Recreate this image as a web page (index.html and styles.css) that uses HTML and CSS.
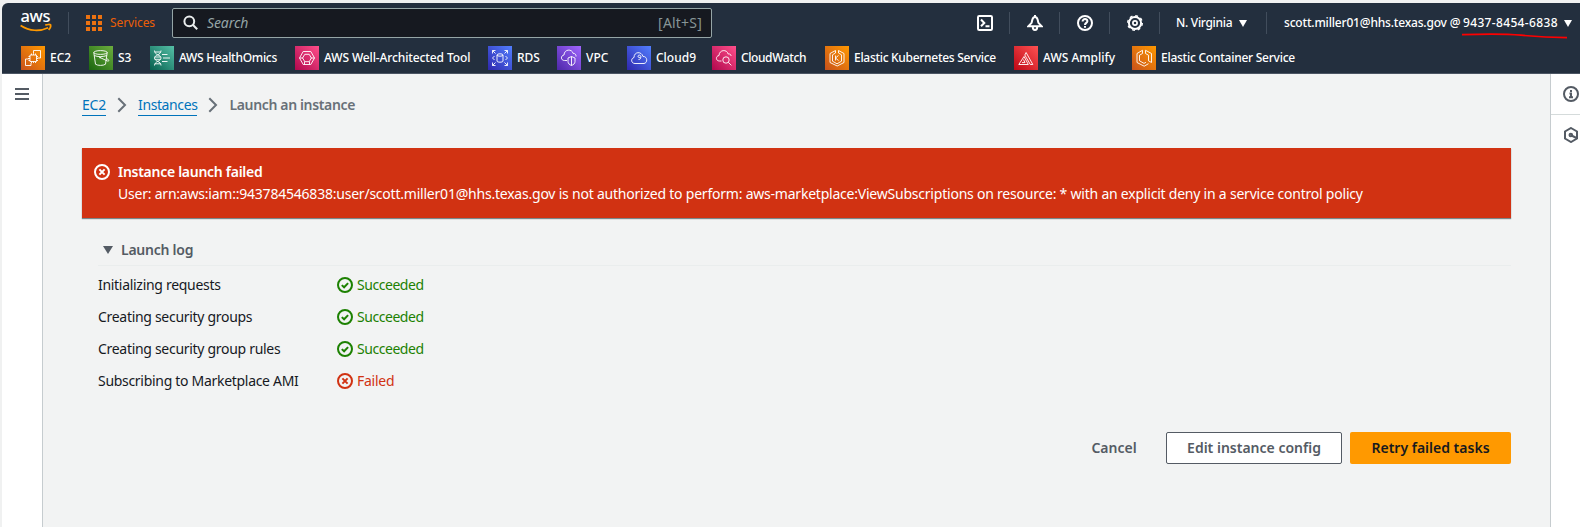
FILE: index.html
```
<!DOCTYPE html>
<html lang="en">
<head>
<meta charset="utf-8">
<title>Launch an instance | EC2</title>
<link rel="stylesheet" href="styles.css">
</head>
<body>
<svg class="defs" aria-hidden="true">
  <symbol id="ok" viewBox="0 0 16 16"><circle cx="8" cy="8" r="7"/><path d="M4.8 8.1l2.3 2.2 4-4.2"/></symbol>
  <symbol id="bad" viewBox="0 0 16 16"><circle cx="8" cy="8" r="7"/><path d="M5.4 5.4l5.2 5.2M10.6 5.4l-5.2 5.2"/></symbol>
  <symbol id="chevron" viewBox="0 0 10 16"><path d="M1.3 1.3L8 8l-6.7 6.7"/></symbol>
</svg>
<div class="window">
  <header class="header">
    <div class="topbar">
      <svg class="aws" viewBox="0 0 32 22">
        <text x="0.5" y="10.2" textLength="30">aws</text>
        <path d="M.6 13.5c9 6 19.500 6 27.500 2.200"/>
        <path d="M25.300 13.100c2-.8 4.800-.8 5.300-.2.300 1-.6 3.500-2 4.900"/>
      </svg>
      <i class="rule"></i>
      <svg class="grid-icon" viewBox="0 0 16 16"><path d="M0 0h4v4H0zM6 0h4v4H6zM12 0h4v4h-4zM0 6h4v4H0zM6 6h4v4H6zM12 6h4v4h-4zM0 12h4v4H0zM6 12h4v4H6zM12 12h4v4h-4z"/></svg>
      <span class="services">Services</span>
      <div class="search">
        <svg class="icon" viewBox="0 0 16 16"><circle cx="6.300" cy="6.300" r="4.900"/><path d="M9.800 9.800l4.400 4.400"/></svg>
        <span class="placeholder">Search</span>
        <span class="shortcut">[Alt+S]</span>
      </div>
      <div class="tools">
        <span class="tool"><svg class="icon" viewBox="0 0 16 16"><rect x="1" y="1" width="14" height="14" rx="1.200"/><path d="M4 4.500L7.300 8 4 11.300M8.500 11.300h4"/></svg></span>
        <span class="tool"><svg class="icon" viewBox="0 0 16 16"><path d="M1.500 11.200h13L11.400 7.800 10.600 4.500C10 2.600 9 2 8 2S6 2.600 5.400 4.500L4.600 7.800zM5.800 12c0 4 4.400 4 4.400 0M8 0v2"/></svg></span>
        <span class="tool"><svg class="icon" viewBox="0 0 16 16"><circle cx="8" cy="8" r="7"/><path d="M5.600 6.500C5.500 3.300 10.500 3.300 10.400 6.300 10.300 7.900 8 7.900 8 9.900M8 11v1.800"/></svg></span>
        <span class="tool"><svg class="icon" viewBox="0 0 16 16"><circle cx="8" cy="8" r="6.100"/><circle class="teeth" cx="8" cy="8" r="7.300"/><circle class="hub" cx="8" cy="8" r="2.100"/></svg></span>
      </div>
      <div class="region">N. Virginia <svg class="caret" viewBox="0 0 8 7"><path d="M0 0h8L4 7z"/></svg></div>
      <div class="account"><span class="user">scott.miller01@hhs.texas.gov @ </span><span class="account-id">9437-8454-6838<svg class="mark" viewBox="0 0 108 7"><path d="M1 2.600C20 2 48 2 60 3.200S85 5.500 106 5.600"/></svg></span><svg class="caret" viewBox="0 0 8 7"><path d="M0 0h8L4 7z"/></svg></div>
    </div>
    <nav class="favorites">
      <a class="fav ec2"><svg class="tile orange" viewBox="0 0 24 24"><path d="M12.500 7.500V4.500h7V12h-3M10 19.500H4.500V13h3v-1M9 9h6.500v6.500H9zM10.500 7.500V9M12.500 7.500V9M14.500 7.500V9M10.500 15.500V17M12.500 15.500V17M14.500 15.500V17M7.500 10.500H9M7.500 12.500H9M7.500 14.500H9M15.500 10.500H17M15.500 12.500H17M15.500 14.500H17M10 17v2.500"/></svg><span>EC2</span></a>
      <a class="fav s3"><svg class="tile green" viewBox="0 0 24 24"><ellipse cx="11.500" cy="6.500" rx="6.700" ry="1.900"/><path d="M4.800 6.500l1.700 11.700c2 1.600 8 1.600 10 0l1.700-11.700M5.300 9.500c3 1.500 9 1.500 12.400 0M11 11.500l7.500 3.500c2.500.5 1-1.700-.9-2.600"/><circle cx="11" cy="11.500" r=".5"/></svg><span>S3</span></a>
      <a class="fav omics"><svg class="tile teal" viewBox="0 0 24 24"><path d="M4.500 4.500c0 5 6.500 4 6.500 7.500s-6.500 3-6.500 7.500M11 4.500c0 5-6.500 4-6.500 7.500s6.500 3 6.500 7.500M5 6h5.500M5 17.800h5.500M5 11h5.500M5 13.300h5.500M12 8.500h5.500M13 12h7M12 15.500h5.500"/></svg><span>AWS HealthOmics</span></a>
      <a class="fav wat"><svg class="tile pink" viewBox="0 0 24 24"><path d="M8.200 5.500h7.600L19.500 12l-3.700 6.500H8.200L4.500 12zM9.500 15.500v3M14.500 15.500v3M4.500 12H8M16 12h3.500"/><path d="M9.800 8.300h4.400l2.200 3.700-2.200 3.700H9.800L7.600 12z"/></svg><span>AWS Well-Architected Tool</span></a>
      <a class="fav rds"><svg class="tile blue" viewBox="0 0 24 24"><ellipse cx="12" cy="9" rx="3" ry="1.200"/><path d="M9 9v6c0 1.600 6 1.600 6 0V9M4.500 7.500v-3h3M4.500 4.500l3 3M16.500 4.500h3v3M19.500 4.500l-3 3M4.500 16.500v3h3M4.500 19.500l3-3M19.500 16.500v3h-3M19.500 19.500l-3-3M6.500 10l-2 2 2 2M17.500 10l2 2-2 2"/></svg><span>RDS</span></a>
      <a class="fav vpc"><svg class="tile violet" viewBox="0 0 24 24"><path d="M10 14.500H7.500C3.500 14.500 3.500 9.500 7 9c.2-6 8-6.500 9.200-1.500 2-.3 3 1.300 2.800 3"/><path d="M11 12l3.500-1.500L18 12v3.500c0 2-1.500 3.300-3.500 4-2-.7-3.500-2-3.500-4zM14.500 10.500v9"/></svg><span>VPC</span></a>
      <a class="fav cloud9"><svg class="tile blue" viewBox="0 0 24 24"><path d="M8 17.500C4 17.500 3.500 12.500 7 11.500 7 5.500 14.500 5 16 10.500c4.500-.5 5 6.500 1 7z"/><path d="M13.800 10.800c-.5 1.300-2.800 1-2.800-.5s2.800-1.700 2.800.2c0 2-.3 3-2.300 3"/></svg><span>Cloud9</span></a>
      <a class="fav watch"><svg class="tile rose" viewBox="0 0 24 24"><path d="M9.500 15H7.500c-4 0-4-5-.5-5.500.2-6 8-6.500 9.200-1.500 2-.3 3 .8 2.800 2"/><circle cx="14" cy="14" r="3.200"/><path d="M16.400 16.400l3 3"/></svg><span>CloudWatch</span></a>
      <a class="fav eks"><svg class="tile orange" viewBox="0 0 24 24"><path d="M10.500 7L7.500 8.800v6.400l4.500 2.600 4.500-2.600V8.800L13.500 7V4.500l5.500 3v9L12.200 20 5 16.500v-9l5.500-3zM10.500 9.500v5M13.500 9.500l-3 2.500 3 2.500"/></svg><span>Elastic Kubernetes Service</span></a>
      <a class="fav amplify"><svg class="tile red" viewBox="0 0 24 24"><path d="M4.800 18.500h9.500L10 10.500zM8 16.600h3L9.500 13.500M10.800 9l1.300-2.500 6.700 12h-2.500L10.800 9"/></svg><span>AWS Amplify</span></a>
      <a class="fav ecs"><svg class="tile orange" viewBox="0 0 24 24"><path d="M10.500 7.500L7.500 9.200v5.600l4.500 2.600 2-1.100M13.500 7.500l3 1.700v5.600l3 1.700v-9l-6-3.200zM10.500 7.500V4.300L5 7.500v9l7.200 3.700 4.300-2.500"/></svg><span>Elastic Container Service</span></a>
    </nav>
  </header>
  <div class="body">
    <aside class="left"><svg class="menu" viewBox="0 0 14 12"><path d="M0 1h14M0 6h14M0 11h14"/></svg></aside>
    <main class="main">
      <nav class="crumbs">
        <a class="link">EC2</a><svg class="chev"><use href="#chevron"/></svg><a class="link">Instances</a><svg class="chev"><use href="#chevron"/></svg><span class="current">Launch an instance</span>
      </nav>
      <section class="alert">
        <svg class="status-icon"><use href="#bad"/></svg>
        <div>
          <h1 class="alert-title">Instance launch failed</h1>
          <p class="alert-text">User: arn:aws:iam::943784546838:user/scott.miller01@hhs.texas.gov is not authorized to perform: aws-marketplace:ViewSubscriptions on resource: * with an explicit deny in a service control policy</p>
        </div>
      </section>
      <section class="log">
        <h2 class="log-title"><svg class="expander" viewBox="0 0 10 8"><path d="M0 0h10L5 8z"/></svg><span>Launch log</span></h2>
        <div class="row"><span>Initializing requests</span><span class="status success"><svg class="status-icon"><use href="#ok"/></svg>Succeeded</span></div>
        <div class="row"><span>Creating security groups</span><span class="status success"><svg class="status-icon"><use href="#ok"/></svg>Succeeded</span></div>
        <div class="row"><span>Creating security group rules</span><span class="status success"><svg class="status-icon"><use href="#ok"/></svg>Succeeded</span></div>
        <div class="row"><span>Subscribing to Marketplace AMI</span><span class="status error"><svg class="status-icon"><use href="#bad"/></svg>Failed</span></div>
      </section>
      <div class="actions">
        <button class="btn plain">Cancel</button>
        <button class="btn normal">Edit instance config</button>
        <button class="btn primary">Retry failed tasks</button>
      </div>
    </main>
    <aside class="right">
      <div class="panel-tab"><svg class="icon" viewBox="0 0 16 16"><circle cx="8" cy="8" r="7"/><path d="M8 4v2M6.500 7.500H8V11M6 11.300h4"/></svg></div>
      <div class="panel-tab"><svg class="icon" viewBox="0 0 16 16"><path d="M8 1l6 3.500v7L8 15l-6-3.500v-7z"/><circle cx="7.800" cy="8" r="1.300"/><path d="M8.500 8.500l5 2.500"/></svg></div>
    </aside>
  </div>
</div>
</body>
</html>
```
FILE: styles.css
```
* { box-sizing: border-box; }
body { margin: 0; background: #f0f1f1; font: 14px/22px "Noto Sans", "Open Sans", sans-serif; color: #16191f; overflow: hidden; }
h1, h2, p { margin: 0; font-size: inherit; }
svg { display: block; flex: none; fill: none; stroke: currentColor; stroke-width: 2; }
.defs { position: absolute; width: 0; height: 0; }
.window { padding: 3px 0 0 2px; height: 527px; display: flex; flex-direction: column; }
.icon { width: 16px; height: 16px; }

.header { height: 71px; flex: none; background: #232f3e; border-bottom: 1px solid #4b5563; border-top-left-radius: 6px; color: #fff; font-size: 12px; white-space: nowrap; }
.topbar { height: 40px; display: flex; align-items: center; padding-left: 18px; }
.aws { width: 32px; height: 22px; overflow: visible; stroke: #ff9900; stroke-width: 1.700; }
.aws text { font: 500 16.500px "Noto Sans", sans-serif; fill: #fff; stroke: none; }
.rule { width: 1px; height: 22px; background: #414d5c; margin: 0 17px 0 16px; }
.grid-icon { width: 16px; height: 16px; fill: #ec7211; stroke: none; }
.services { width: 46px; margin-left: 8px; color: #eb5f07; letter-spacing: -.1px; }
.search { width: 540px; height: 30px; margin-left: 16px; padding: 0 9px 0 10px; display: flex; align-items: center; border: 1px solid #95a5a6; border-radius: 2px; background: #161920; font-size: 14px; color: #879596; }
.search .icon { color: #eaeded; }
.placeholder { margin-left: 8px; font-style: italic; color: #95a5a6; letter-spacing: -.1px; }
.shortcut { margin-left: auto; letter-spacing: .2px; }
.tools { display: flex; margin-left: 248px; }
.tool { width: 50px; height: 22px; display: flex; align-items: center; justify-content: center; border-right: 1px solid #414d5c; }
.teeth { stroke-width: 1.400; stroke-dasharray: 2.870 2.863; }
.hub { stroke-width: 1.700; }
.caret { width: 8px; height: 7px; fill: #fff; stroke: none; }
.region { width: 107px; height: 22px; padding-left: 16px; display: flex; align-items: center; gap: 7px; font-weight: 500; letter-spacing: -.300px; border-right: 1px solid #414d5c; }
.account { margin-left: 17px; display: flex; align-items: center; font-weight: 500; white-space: pre; }
.user { width: 179px; letter-spacing: -.18px; }
.account-id { position: relative; width: 95px; letter-spacing: .34px; }
.account .caret { margin-left: 6px; }
.mark { position: absolute; left: -2px; top: 20px; width: 108px; height: 7px; stroke: #f00; stroke-width: 1.700; }

.favorites { display: grid; grid-template-columns: 68px 61px 145px 193px 69px 70px 85px 113px 189px 118px 168px; padding: 3px 0 0 19px; }
.fav { display: flex; align-items: center; gap: 5px; font-weight: 500; }
.tile { width: 24px; height: 24px; stroke: #fff; stroke-width: .9; }
.omics { letter-spacing: -.28px; }
.wat { letter-spacing: -.12px; }
.watch { letter-spacing: -.4px; }
.eks { letter-spacing: -.3px; }
.ecs { letter-spacing: -.25px; }
.orange { background: linear-gradient(45deg, #c8511b, #ff9900); }
.green { background: linear-gradient(45deg, #1b660f, #6cae3e); }
.teal { background: linear-gradient(45deg, #055f4e, #56c0a7); }
.pink, .rose { background: linear-gradient(45deg, #b0084d, #ff4f8b); }
.blue { background: linear-gradient(45deg, #2e27ad, #527fff); }
.violet { background: linear-gradient(45deg, #4d27a8, #a166ff); }
.red { background: linear-gradient(45deg, #bd0816, #ff5252); }

.body { flex: 1; display: grid; grid-template-columns: 41px 1fr 30px; }
.left { background: #fff; border-right: 1px solid #c6cccf; padding: 14px 0 0 13px; }
.menu { width: 14px; height: 12px; color: #545b64; }
.main { background: #f2f3f3; padding: 20px 39px 0 39px; }
.crumbs { display: flex; align-items: center; height: 22px; }
.link { color: #0073bb; line-height: 20px; border-bottom: 1px solid #0073bb; letter-spacing: -.400px; }
.link:first-child { letter-spacing: -.2px; }
.chev { width: 10px; height: 16px; margin: 0 11px; color: #687078; }
.current { color: #687078; font-weight: 600; letter-spacing: -.350px; }
.alert { margin-top: 32px; height: 70px; padding: 13px 12px; display: flex; gap: 8px; background: #d13212; color: #fff; box-shadow: 0 1px 1px rgba(0, 28, 36, .5); }
.status-icon { width: 16px; height: 16px; }
.alert .status-icon { margin-top: 3px; }
.alert-title { font-weight: 600; letter-spacing: -.280px; }
.alert-text { white-space: nowrap; letter-spacing: -.220px; }
.log { padding-left: 16px; }
.log-title { height: 48px; padding: 21px 0 0 5px; display: flex; gap: 8px; color: #545b64; font-weight: 600; letter-spacing: -.25px; border-bottom: 1px solid #eaeded; }
.expander { width: 10px; height: 8px; margin-top: 7px; fill: #545b64; stroke: none; }
.row { display: grid; grid-template-columns: 239px 1fr; height: 32px; align-items: center; letter-spacing: -.300px; }
.log-title + .row { margin-top: 3px; }
.status { display: flex; align-items: center; gap: 4px; letter-spacing: -.450px; }
.error { letter-spacing: -.25px; }
.success { color: #1d8102; }
.error { color: #d13212; }
.actions { display: flex; justify-content: flex-end; margin-top: 35px; }
.btn { height: 32px; border: 1px solid transparent; border-radius: 2px; padding: 0; background: none; color: #545b64; font: 600 14px/22px "Noto Sans", "Open Sans", sans-serif; }
.plain { width: 86px; }
.normal { width: 176px; margin-left: 9px; background: #fff; border-color: #545b64; }
.primary { width: 161px; margin-left: 8px; background: #ff9900; color: #16191f; }
.right { background: #fff; border-left: 1px solid #c6cccf; overflow: hidden; color: #545b64; }
.panel-tab { height: 41px; padding: 12px 0 0 12px; }
.panel-tab:first-child { border-bottom: 1px solid #d5dbdb; }
```
